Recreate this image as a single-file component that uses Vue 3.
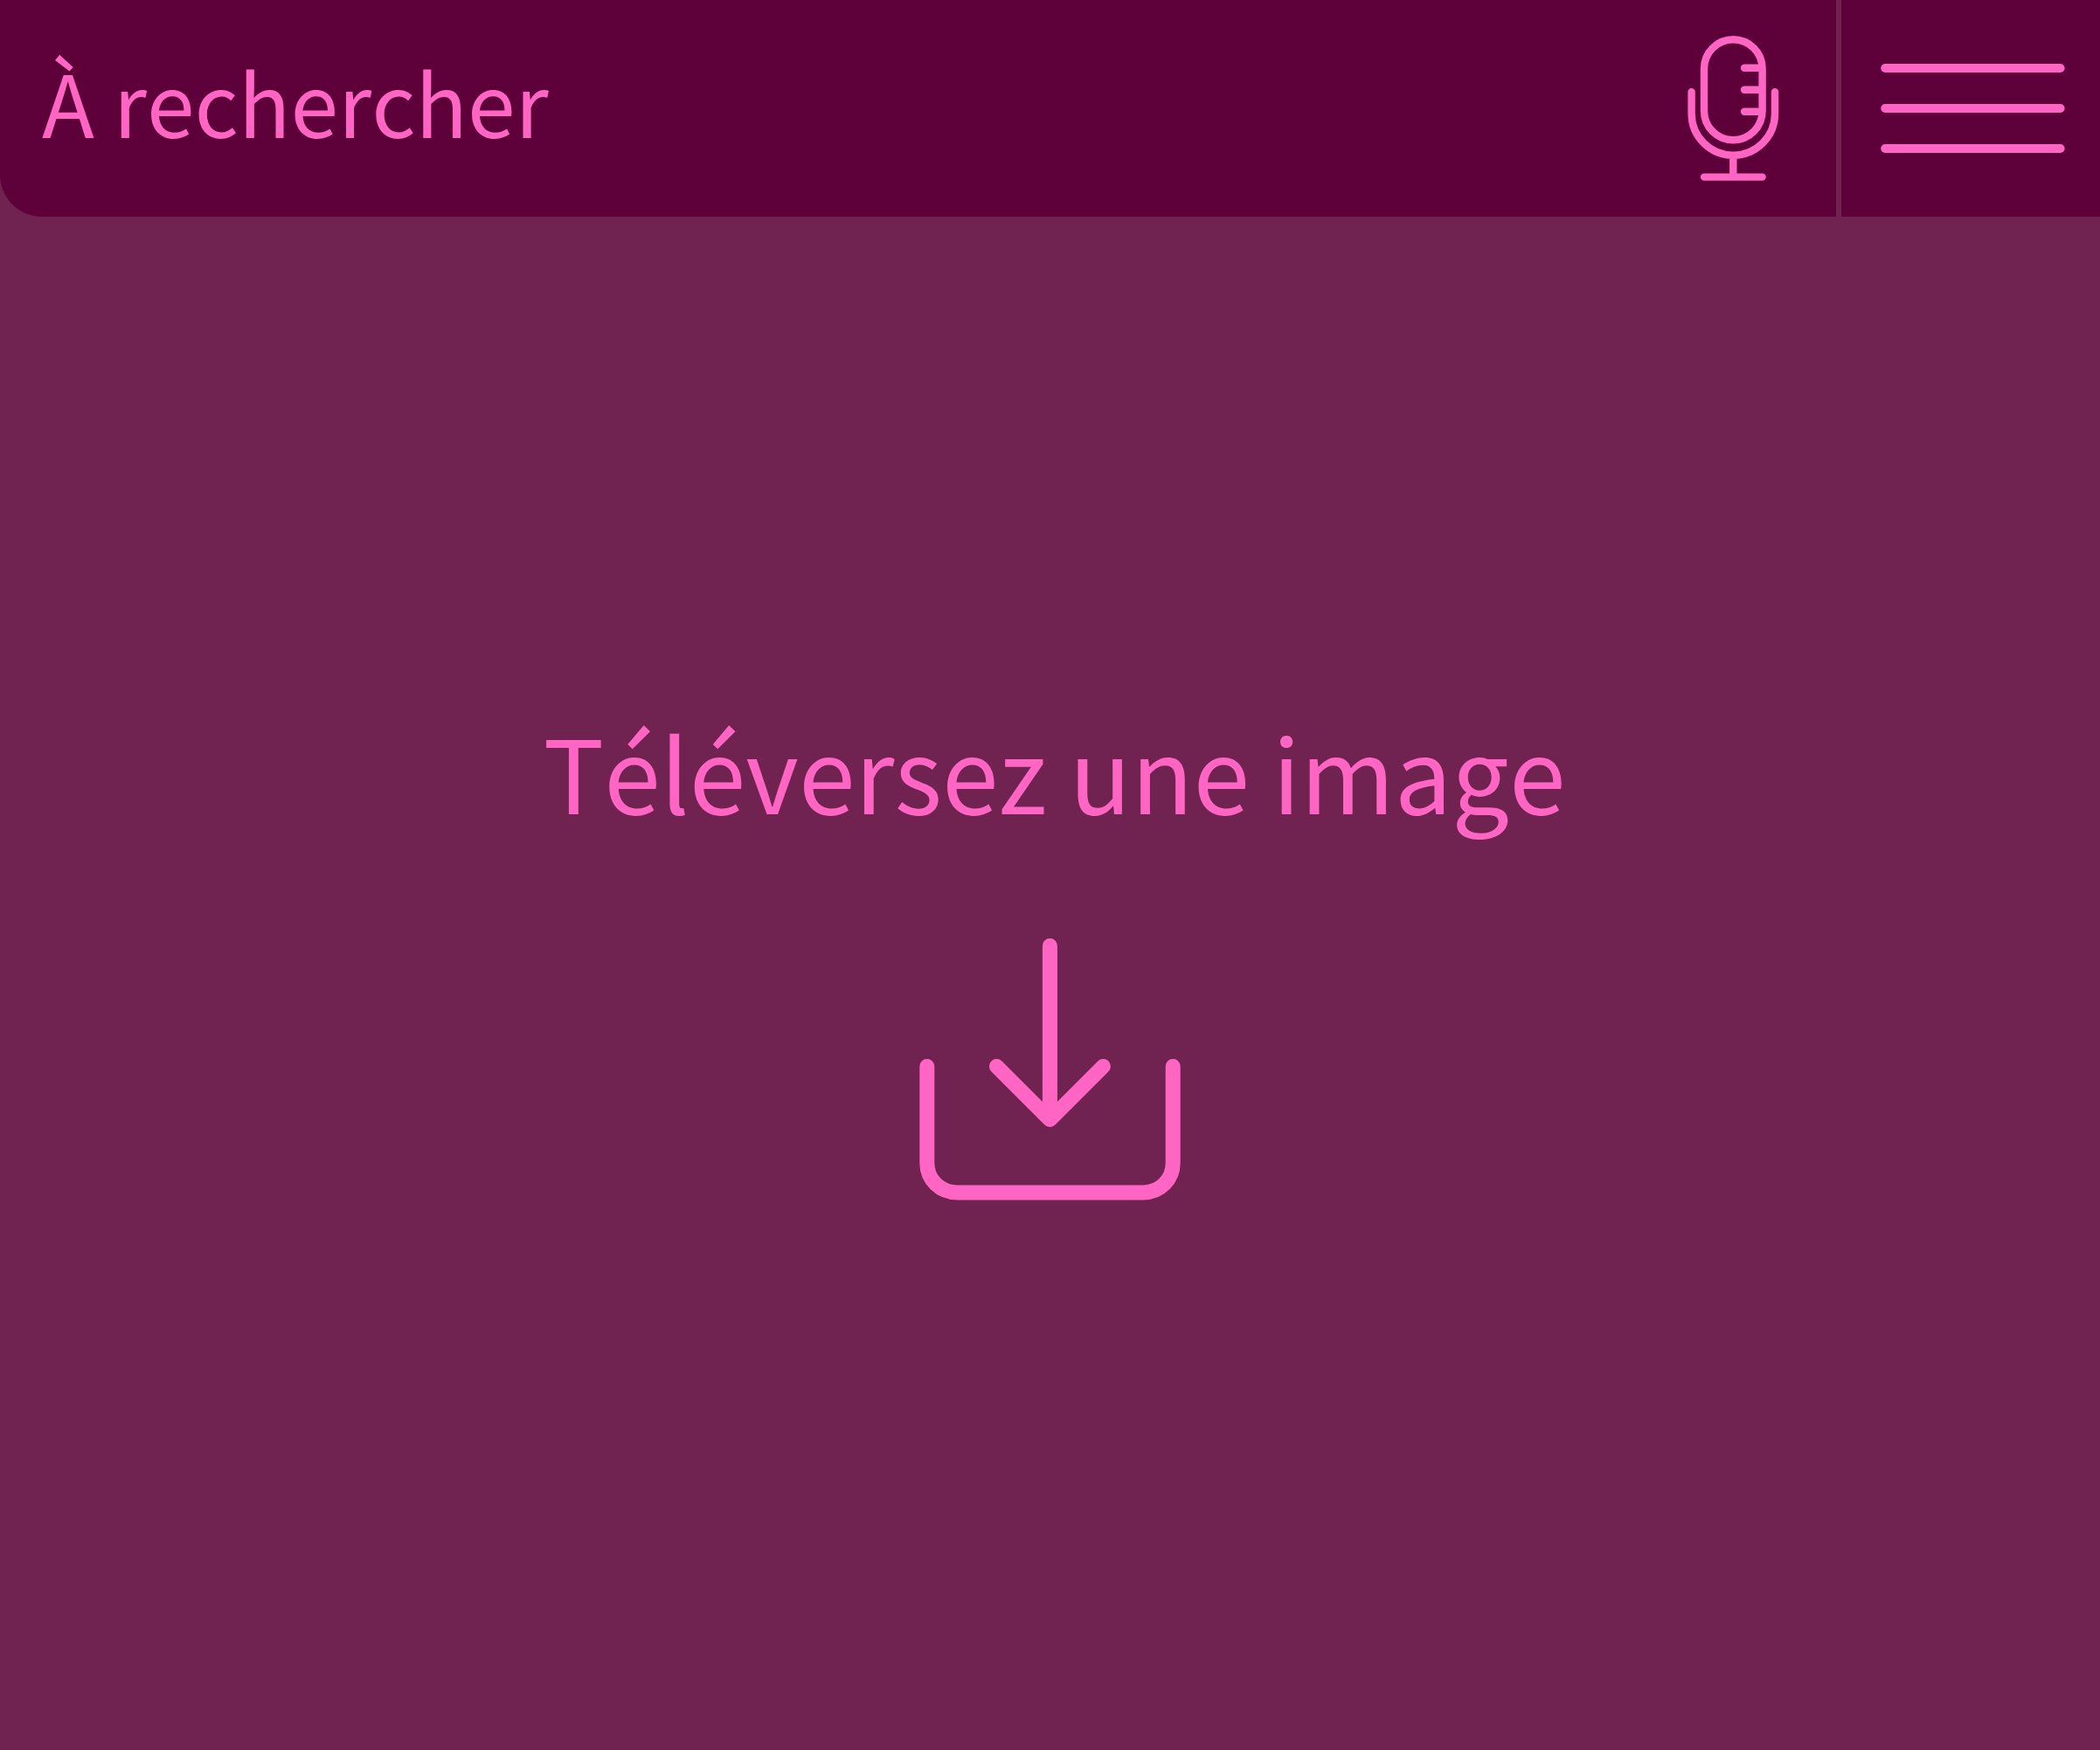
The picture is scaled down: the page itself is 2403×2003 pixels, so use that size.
<script setup>
const menuLines = [1, 2, 3]
</script>

<template>
  <div class="page">
    <header class="bar">
      <div class="search">
        <span class="query">À rechercher</span>
        <button class="mic" aria-label="Microphone">
          <svg width="110" height="176" viewBox="1928 36 110 176">
            <rect x="1950" y="45.2" width="66.6" height="115" rx="33.3" />
            <path d="M1996 77.7H2016M1996 102.7H2016M1996 127.7H2016M1935.6 105.2V130.1A47.7 47.7 0 0 0 2031 130.1V105.2M1983.3 178V202.6M1950 202.6H2016.6" />
          </svg>
        </button>
      </div>
      <button class="menu" aria-label="Menu">
        <svg width="214" height="104" viewBox="2151 72 214 104">
          <path v-for="n in menuLines" :key="n" class="line" :d="`M2157.2 ${32 + n * 46}H2357.6`" />
        </svg>
      </button>
    </header>
    <main class="drop">
      <p class="title">Téléversez une image</p>
      <svg class="upload" width="301" height="304" viewBox="1051 1073 301 304">
        <path d="M1201.4 1082.5V1281.5M1140.4 1220.5L1201.4 1281.5L1262.4 1220.5M1060.8 1220.5V1331C1060.8 1350 1075.5 1364.9 1096 1364.9H1308.5C1327.5 1364.9 1342.2 1350 1342.2 1331V1220.5" />
      </svg>
    </main>
  </div>
</template>

<style>
body {
  background: #702251;
}
</style>

<style scoped>
.page {
  display: flex;
  flex-direction: column;
  height: 2003px;
  background: #702251;
  color: #ff66c4;
  font-family: "Noto Sans CJK SC", "Noto Sans", sans-serif;
  font-kerning: none;
}
.bar {
  display: flex;
  gap: 6px;
  height: 248px;
}
.search {
  display: flex;
  justify-content: space-between;
  box-sizing: border-box;
  width: 2101px;
  padding: 0 63px 0 48px;
  background: #5e0039;
  border-bottom-left-radius: 48px;
}
.query {
  margin-top: 43px;
  font-size: 98.4px;
  line-height: 144px;
  white-space: pre;
}
button {
  border: 0;
  padding: 0;
  background: none;
  color: inherit;
}
.mic {
  height: 176px;
  margin-top: 36px;
}
svg {
  display: block;
  fill: none;
  stroke: currentColor;
  stroke-width: 8.4;
  stroke-linecap: round;
  stroke-linejoin: round;
}
.menu {
  display: flex;
  flex: 1;
  align-items: center;
  padding: 0 38px 0 44px;
  background: #5e0039;
}
.line {
  stroke-width: 10;
}
.drop {
  display: flex;
  flex: 1;
  flex-direction: column;
  align-items: center;
}
.title {
  margin: 548px 0 0 10px;
  font-size: 116.4px;
  line-height: 172px;
  white-space: pre;
}
.upload {
  margin-top: 105px;
  stroke-width: 17;
}
</style>
